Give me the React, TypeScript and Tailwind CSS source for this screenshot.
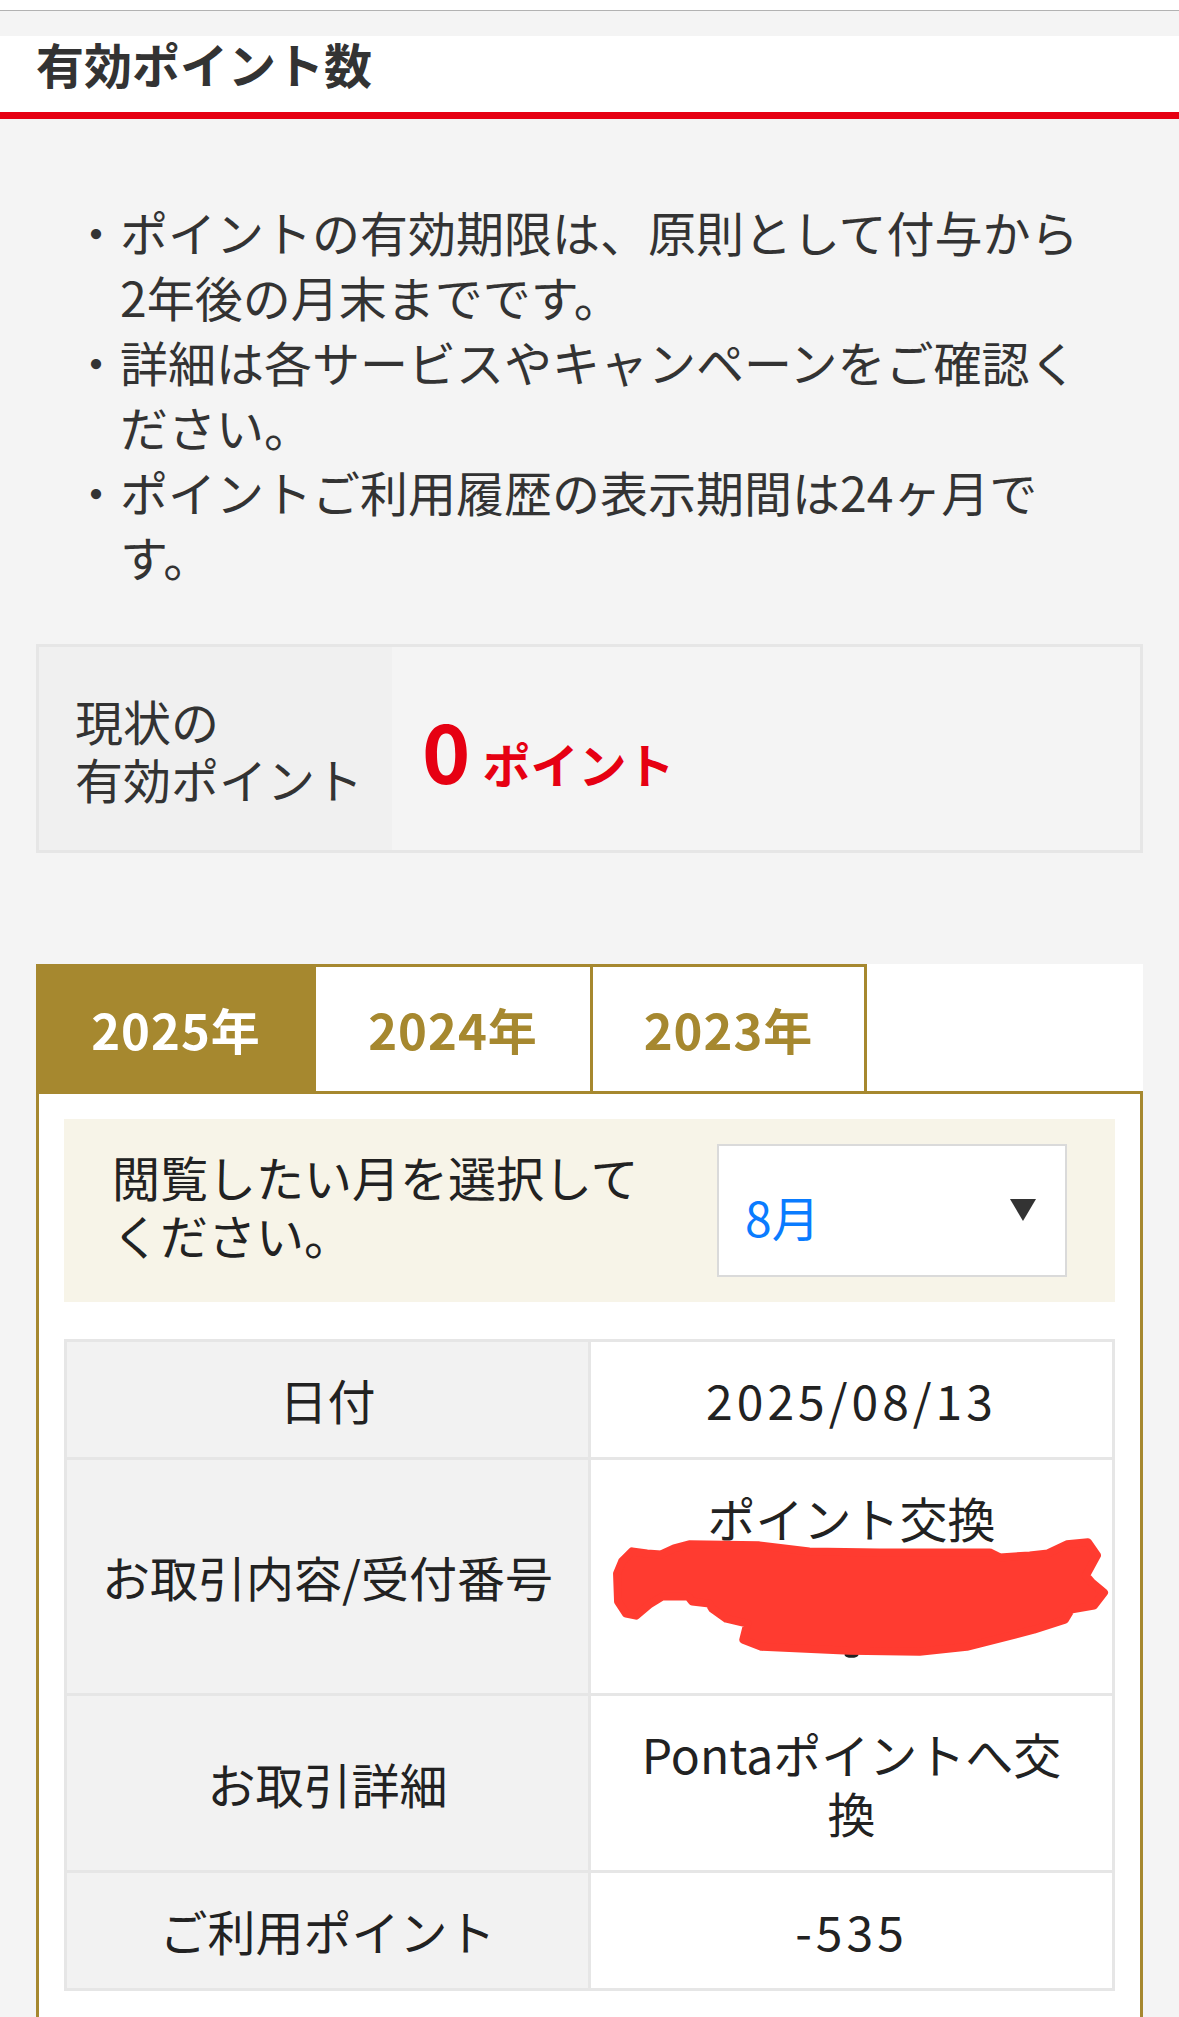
import React from 'react';

const gold = 'border-[#a6882f]';

const notes: string[] = [
    'ポイントの有効期限は、原則として付与から2年後の月末までです。',
    '詳細は各サービスやキャンペーンをご確認ください。',
    'ポイントご利用履歴の表示期間は24ヶ月です。',
];

const years = ['2025年', '2024年', '2023年'];

const Scribble: React.FC = () => (
    <svg
        className="absolute inset-0 h-full w-full"
        viewBox="592 1461 520 232"
        preserveAspectRatio="none"
    >
        <ellipse cx="852" cy="1655" rx="7" ry="3" fill="#222" />
        <path
            d="M633 1552 L648 1554 L662 1555 L675 1549 L690 1545 L760 1546 L810 1552 L880 1553 L990 1553
               L1000 1558 L1030 1556 L1048 1554 L1067 1545 L1088 1543 L1097 1556 L1086 1576 L1092 1583
               L1104 1593 L1094 1606 L1071 1610 L1065 1620 L1034 1630 L967 1647 L920 1652 L850 1651
               L762 1647 L744 1640 L748 1624 L727 1619 L713 1609 L710 1604 L693 1602 L689 1597 L663 1597
               L650 1605 L637 1616 L627 1614 L619 1602 L618 1574 L623 1562 Z"
            fill="#ff3b30"
            stroke="#ff3b30"
            strokeWidth="8"
            strokeLinejoin="round"
        />
    </svg>
);

const Row: React.FC<{ label: string; children: React.ReactNode; relative?: boolean }> = ({ label, children, relative }) => (
    <>
        <div className="flex items-center justify-center bg-[#f2f2f2] px-[16px] py-[28px] text-center leading-[59px]">
            {label}
        </div>
        <div className={`flex flex-col items-center justify-center bg-white px-[20px] py-[28px] text-center leading-[59px] ${relative ? 'relative overflow-hidden' : ''}`}>
            {children}
        </div>
    </>
);

const App: React.FC = () => {
    return (
        <div className="h-[2017px] w-[1179px] overflow-hidden bg-[#f4f4f4] font-['Noto_Sans_CJK_JP','Noto_Sans',sans-serif] text-[48px] text-[#333]">
            <div className="h-[11px] border-b border-[#b2b2b2] bg-white" />
            <div className="h-[25px]" />

            <div className="h-[83px] border-b-[7px] border-[#e60012] bg-white px-[36px] pt-[3px] text-[48px] font-bold leading-[48px] text-[#333]">
                有効ポイント数
            </div>

            <ul className="pl-[72px] pr-[88px] pt-[80px]">
                {notes.map((n) => (
                    <li key={n} className="flex leading-[65px]">
                        <span className="w-[48px] shrink-0 text-center">・</span>
                        <span className="flex-1">{n}</span>
                    </li>
                ))}
            </ul>

            <div className="mx-[36px] mt-[55px] flex h-[209px] border-[3px] border-[#e6e6e6]">
                <div className="flex w-[353px] items-center bg-[#f0f0f0] pl-[36px] leading-[58px]">
                    <p>
                        現状の
                        <br />
                        有効ポイント
                    </p>
                </div>
                <div className="flex flex-1 items-center pl-[30px]">
                    <span className="flex items-baseline font-bold text-[#e60012]">
                        <span className="text-[82px] leading-none">0</span>
                        <span className="ml-[12px] text-[48px] leading-none">ポイント</span>
                    </span>
                </div>
            </div>

            <div className="mx-[36px] mt-[111px]">
                <div className="flex bg-white">
                    {years.map((y, i) => (
                        <div
                            key={y}
                            className={`flex h-[127px] w-[277px] items-center justify-center border-l-[3px] border-t-[3px] ${gold} text-[49px] font-bold tracking-[1px] ${
                                i === 0 ? 'bg-[#a6882f] text-white' : 'bg-white text-[#a6882f]'
                            } ${i === years.length - 1 ? 'border-r-[3px]' : ''}`}
                        >
                            {y}
                        </div>
                    ))}
                </div>

                <div className={`border-[3px] ${gold} bg-white px-[25px] pb-[60px] pt-[25px]`}>
                    <div className="flex items-center justify-between bg-[#f7f4e8] px-[48px] py-[25px]">
                        <p className="mb-[12px] w-[560px] leading-[58px] text-[#222]">閲覧したい月を選択してください。</p>
                        <div className="flex h-[133px] w-[350px] items-center justify-between border-2 border-[#dadada] bg-white pl-[26px] pr-[29px]">
                            <span className="pt-[10px] leading-none text-[#0a7cff]">8月</span>
                            <svg width="26" height="22" viewBox="0 0 26 22" className="mb-[2px]">
                                <path d="M0 0 H26 L13 22 Z" fill="#333" />
                            </svg>
                        </div>
                    </div>

                    <div className="mt-[37px] grid grid-cols-2 gap-[3px] bg-[#e6e6e6] p-[3px] text-[#222]">
                        <Row label="日付">
                            <span className="tracking-[4px]">2025/08/13</span>
                        </Row>
                        <Row label="お取引内容/受付番号" relative>
                            <span>ポイント交換</span>
                            <span className="invisible">0000000000</span>
                            <span className="invisible">0000</span>
                            <Scribble />
                        </Row>
                        <Row label="お取引詳細">
                            <span>
                                Pontaポイントへ交
                                <br />
                                換
                            </span>
                        </Row>
                        <Row label="ご利用ポイント">
                            <span className="tracking-[4px]">-535</span>
                        </Row>
                    </div>
                </div>
            </div>
        </div>
    );
};

export default App;
